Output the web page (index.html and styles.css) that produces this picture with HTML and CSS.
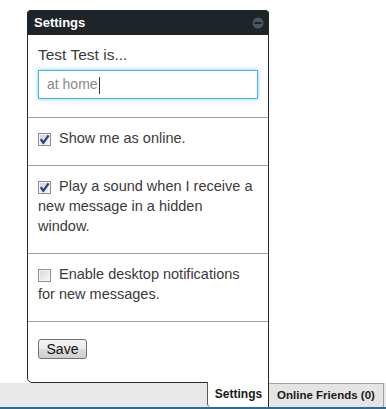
FILE: index.html
```html
<!DOCTYPE html>
<html>
<head>
<meta charset="utf-8">
<link rel="stylesheet" href="styles.css">
</head>
<body>
<div class="app">
  <div class="panel">
    <div class="header">
      <span class="title">Settings</span>
      <span class="minimize"><svg width="12" height="12" viewBox="0 0 12 12"><circle cx="6" cy="6" r="5.5" fill="#4b565f"/><rect x="2.5" y="5" width="7" height="2" fill="#1e2529"/></svg></span>
    </div>
    <div class="section status">
      <div class="label">Test Test is...</div>
      <div class="input"><span class="value">at home</span><span class="caret"></span></div>
    </div>
    <div class="section">
      <span class="check on"><svg width="11" height="11" viewBox="0 0 11 11"><path d="M1.8 5.2 L4.3 8.8 L9.6 1.4" fill="none" stroke="#2a3e98" stroke-width="2.3"/></svg></span>Show me as online.
    </div>
    <div class="section">
      <span class="check on"><svg width="11" height="11" viewBox="0 0 11 11"><path d="M1.8 5.2 L4.3 8.8 L9.6 1.4" fill="none" stroke="#2a3e98" stroke-width="2.3"/></svg></span>Play a sound when I receive a<br>new message in a hidden<br>window.
    </div>
    <div class="section">
      <span class="check"></span>Enable desktop notifications<br>for new messages.
    </div>
    <div class="section last">
      <button class="save">Save</button>
    </div>
  </div>
  <div class="taskbar">
    <div class="tab active">Settings</div>
    <div class="tab">Online Friends (0)</div>
  </div>
</div>
</body>
</html>
```
FILE: styles.css
```css
html, body {
  margin: 0;
  padding: 0;
  background: #fff;
}
.app {
  display: flex;
  flex-direction: column;
  width: 386px;
  height: 409px;
  font-family: "Liberation Sans", Arial, sans-serif;
}
.panel {
  margin: 10px 0 0 27px;
  width: 242px;
  box-sizing: border-box;
  border: 1px solid #23292d;
  border-radius: 5px 5px 0 5px;
  background: #fff;
  color: #3a3a3a;
  font-size: 14.5px;
  line-height: 20px;
}
.header {
  height: 24px;
  background: #1e2529;
  display: flex;
  align-items: center;
  justify-content: space-between;
  padding: 0 4px 0 6px;
  margin: -1px -1px 0 -1px;
  border-radius: 4px 4px 0 0;
  border: 1px solid #1e2529;
  border-bottom: none;
}
.title {
  color: #fff;
  font-weight: bold;
  font-size: 13px;
  line-height: 24px;
}
.minimize {
  display: flex;
  width: 12px;
  height: 12px;
}
.section {
  padding: 10px 10px 17px 10px;
  border-bottom: 1px solid #a3a3a3;
  white-space: nowrap;
}
.section.status {
  padding-bottom: 18px;
}
.section.last {
  border-bottom: none;
  padding: 17px 10px 23px 10px;
}
.label {
  font-size: 15.5px;
  line-height: 20px;
  color: #3a3a3a;
}
.input {
  margin-top: 5px;
  width: 220px;
  height: 29px;
  box-sizing: border-box;
  border: 1px solid #45b3f2;
  box-shadow: 0 0 4px rgba(70, 175, 240, 0.7);
  padding: 0 8px;
  display: flex;
  align-items: center;
  font-size: 14px;
  line-height: 27px;
  color: #8a8a8a;
}
.caret {
  display: inline-block;
  width: 1px;
  height: 17px;
  background: #333;
  margin-left: 1px;
  margin-top: 2px;
}
.check {
  display: inline-block;
  width: 13px;
  height: 13px;
  box-sizing: border-box;
  border: 1px solid #8e8f8f;
  background: linear-gradient(135deg, #d2d3d5 0%, #eaebeb 60%, #fafafa 100%);
  box-shadow: inset 0 0 0 1px #f4f4f4;
  vertical-align: -3px;
  margin-right: 8px;
  position: relative;
}
.check svg {
  position: absolute;
  left: 0;
  top: 0;
}
.save {
  display: block;
  width: 49px;
  height: 20px;
  box-sizing: border-box;
  padding: 0;
  border: 1px solid #707070;
  border-radius: 3px;
  background: linear-gradient(#f3f3f3 0%, #ebebeb 50%, #dddddd 51%, #cfcfcf 100%);
  font-family: "Liberation Sans", Arial, sans-serif;
  font-size: 14px;
  line-height: 18px;
  color: #111;
}
.taskbar {
  height: 24px;
  background: #e8e8e8;
  border-bottom: 2px solid #2c6a98;
  display: flex;
  justify-content: flex-end;
  padding-right: 2px;
}
.tab {
  box-sizing: border-box;
  height: 24px;
  font-size: 11.5px;
  font-weight: bold;
  line-height: 23px;
  color: #1a1a1a;
  text-align: center;
  white-space: nowrap;
}
.tab.active {
  width: 62px;
  height: 25px;
  margin-top: -1px;
  background: #fff;
  border-left: 1px solid #555;
  border-right: 1px solid #23292d;
  border-radius: 0 0 0 4px;
  font-size: 12px;
  line-height: 25px;
  padding-left: 1px;
}
.tab:not(.active) {
  width: 115px;
  border-top: 1px solid #a0a0a0;
  border-right: 1px solid #a0a0a0;
  background: #e4e4e4;
}
```
